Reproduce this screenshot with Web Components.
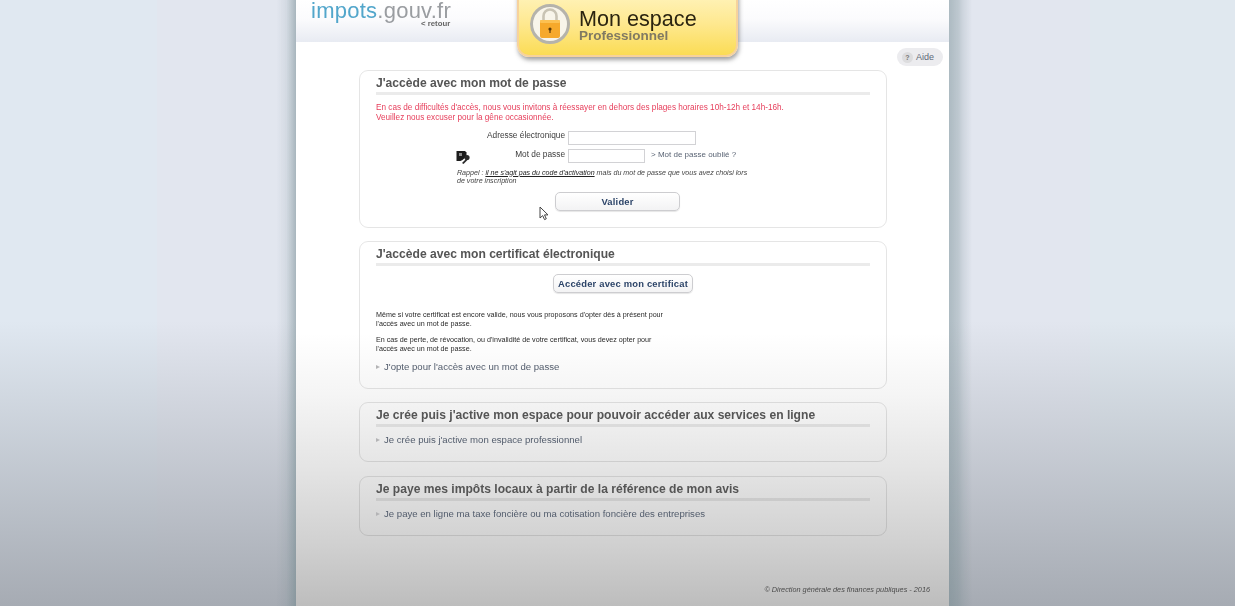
<!DOCTYPE html>
<html lang="fr">
<head>
<meta charset="utf-8">
<title>impots.gouv.fr</title>
<style>
	html, body { margin: 0; height: 100%; overflow: hidden; }
	body {
		font-family: "Liberation Sans", Arial, sans-serif;
		background:
			linear-gradient(to bottom, rgba(166,171,179,0) 53%, rgba(166,171,179,1) 100%),
			linear-gradient(to right, #e0e8f1 0 157px, #e2e6ef 157px 1090px, #e0e8ef 1090px);
	}
	imp-page { filter: blur(0.7px); }
</style>
</head>
<body>

<imp-page>
	<imp-header slot="header"></imp-header>

	<imp-aide></imp-aide>

	<imp-card title="J'accède avec mon mot de passe" height="158">
		<p style="margin:7.5px 0 0;font-size:8.2px;line-height:10px;color:#e63d5a">En cas de difficultés d'accès, nous vous invitons à réessayer en dehors des plages horaires 10h-12h et 14h-16h.<br>Veuillez nous excuser pour la gêne occasionnée.</p>
		<imp-login></imp-login>
	</imp-card>

	<imp-card title="J'accède avec mon certificat électronique" height="148">
		<div style="display:flex;justify-content:center;padding-top:8px">
			<imp-button style="padding:0 4px">Accéder avec mon certificat</imp-button>
		</div>
		<p style="margin:18px 0 0;font-size:7.17px;line-height:9px;color:#2a2a2a">Même si votre certificat est encore valide, nous vous proposons d'opter dès à présent pour<br>l'accès avec un mot de passe.</p>
		<p style="margin:7px 0 0;font-size:7.17px;line-height:9px;color:#2a2a2a">En cas de perte, de révocation, ou d'invalidité de votre certificat, vous devez opter pour<br>l'accès avec un mot de passe.</p>
		<imp-link style="margin-top:7px">J'opte pour l'accès avec un mot de passe</imp-link>
	</imp-card>

	<imp-card title="Je crée puis j'active mon espace pour pouvoir accéder aux services en ligne" height="60">
		<imp-link style="margin-top:7px">Je crée puis j'active mon espace professionnel</imp-link>
	</imp-card>

	<imp-card title="Je paye mes impôts locaux à partir de la référence de mon avis" height="60" style="margin-top:1px">
		<imp-link style="margin-top:7px">Je paye en ligne ma taxe foncière ou ma cotisation foncière des entreprises</imp-link>
	</imp-card>

	<imp-footer>© Direction générale des finances publiques - 2016</imp-footer>
</imp-page>

<script>
class ImpPage extends HTMLElement {
	constructor() {
		super();
		const shadowRoot = this.attachShadow({mode: 'open'});
		shadowRoot.innerHTML = `
			<style>
				:host {
					display: flex;
					flex-direction: column;
					box-sizing: border-box;
					position: relative;
					width: 653px;
					height: 606px;
					margin-left: 296px;
					background: linear-gradient(to bottom, #ffffff 0, #ffffff 55%, #f5f5f5 65%, #e4e4e4 77.5%, #d0d0d0 90%, #bdbdbd 100%);
				}
				:host::before, :host::after {
					content: "";
					position: absolute;
					top: 0;
					bottom: 0;
				}
				:host::before {
					left: -19px;
					width: 19px;
					background: linear-gradient(to right, rgba(105,130,135,0), rgba(105,130,135,.12) 50%, rgba(105,130,135,.48));
				}
				:host::after {
					right: -23px;
					width: 23px;
					background: linear-gradient(to left, rgba(105,130,135,0), rgba(105,130,135,.14) 35%, rgba(105,130,135,.3) 60%, rgba(105,130,135,.44));
				}
				.main {
					display: flex;
					flex-direction: column;
					gap: 13px;
					padding: 28px 62px 0 63px;
					position: relative;
				}
			</style>
			<slot name="header"></slot>
			<div class="main"><slot></slot></div>
		`;
	}
}

class ImpHeader extends HTMLElement {
	constructor() {
		super();
		const shadowRoot = this.attachShadow({mode: 'open'});
		shadowRoot.innerHTML = `
			<style>
				:host {
					display: block;
					position: relative;
					height: 42px;
					background: linear-gradient(to bottom, #ffffff 0, #fbfbfd 45%, #e8ebf2 100%);
				}
				.logo {
					padding: 2px 0 0 15px;
					font-size: 22px;
					line-height: 17px;
					letter-spacing: .25px;
					color: #9a9da1;
					white-space: nowrap;
				}
				.logo b { font-weight: 400; color: #52a6cb; }
				.back {
					position: absolute;
					left: 125px;
					top: 19px;
					font-size: 7.8px;
					line-height: 9px;
					font-weight: 700;
					color: #666;
				}
				.badge {
					position: absolute;
					left: 221px;
					top: -8px;
					box-sizing: border-box;
					width: 221px;
					height: 65px;
					display: flex;
					align-items: flex-start;
					gap: 8px;
					padding: 9px 0 0 10px;
					border: 2px solid #f7d29c;
					border-radius: 0 0 12px 12px;
					background: linear-gradient(to bottom, #fff3bb 0, #fee88e 50%, #fbdc55 100%);
					box-shadow: 1px 3px 4px rgba(70,70,70,.5);
				}
				.lock {
					width: 42px;
					height: 42px;
					flex: none;
				}
				.txt { color: #2b2410; }
				.t1 { font-size: 21.6px; line-height: 22px; padding-top: 5px; }
				.t2 { font-size: 13.5px; line-height: 11px; font-weight: 700; color: #817a62; }
			</style>
			<div class="logo"><b>impots</b>.gouv.fr</div>
			<div class="back">&lt; retour</div>
			<div class="badge">
				<svg class="lock" viewBox="0 0 42 42">
					<circle cx="21" cy="21" r="18.500" fill="#f8f5ea" stroke="#b5b3ab" stroke-width="3"/>
					<path d="M14.500 18v-5a6.500 6.500 0 0 1 13 0v5" fill="none" stroke="#c9c4b4" stroke-width="2.600"/>
					<rect x="11" y="17" width="20" height="18" rx="2" fill="#f6a92b"/>
					<rect x="11" y="17" width="20" height="3" rx="1" fill="#fcc152"/>
					<circle cx="21" cy="26" r="1.600" fill="#5b3a08"/>
					<rect x="20.400" y="26" width="1.200" height="4" fill="#5b3a08"/>
				</svg>
				<div class="txt">
					<div class="t1">Mon espace</div>
					<div class="t2">Professionnel</div>
				</div>
			</div>
		`;
	}
}

class ImpAide extends HTMLElement {
	constructor() {
		super();
		const shadowRoot = this.attachShadow({mode: 'open'});
		shadowRoot.innerHTML = `
			<style>
				:host {
					position: absolute;
					top: 6px;
					left: 601px;
					box-sizing: border-box;
					width: 46px;
					height: 18px;
					display: flex;
					align-items: center;
					gap: 3px;
					padding-left: 5px;
					border-radius: 9px;
					background: #ececef;
					font-size: 9px;
					color: #5e6878;
				}
				.q {
					font-size: 7px;
					font-weight: 700;
					width: 11px;
					height: 11px;
					line-height: 11px;
					text-align: center;
					border-radius: 50%;
					background: #dcdcde;
					color: #777;
				}
			</style>
			<span class="q">?</span><span>Aide</span>
		`;
	}
}

class ImpCard extends HTMLElement {
	constructor() {
		super();
		const shadowRoot = this.attachShadow({mode: 'open'});
		shadowRoot.innerHTML = `
			<style>
				:host {
					display: block;
					box-sizing: border-box;
					border: 1px solid rgba(0,0,0,.1);
					border-radius: 9px;
					padding: 4px 16px 0 16px;
				}
				h2 {
					margin: 0;
					font-size: 12.1px;
					line-height: 16px;
					font-weight: 700;
					color: #555;
					padding-bottom: 1px;
					border-bottom: 3px solid rgba(0,0,0,.08);
					white-space: nowrap;
				}
			</style>
			<h2></h2>
			<slot></slot>
		`;
	}
	connectedCallback() {
		this.shadowRoot.querySelector("h2").textContent = this.getAttribute("title");
		this.removeAttribute("title");
		this.style.height = this.getAttribute("height") + "px";
	}
}

class ImpButton extends HTMLElement {
	constructor() {
		super();
		const shadowRoot = this.attachShadow({mode: 'open'});
		shadowRoot.innerHTML = `
			<style>
				:host {
					display: inline-block;
					box-sizing: border-box;
					height: 19px;
					padding: 0 5px;
					border: 1px solid #cdcdd0;
					border-radius: 5px;
					background: linear-gradient(to bottom, #ffffff, #f3f3f4);
					box-shadow: 0 1px 1px rgba(0,0,0,.1);
					font-size: 9.4px;
					line-height: 17px;
					font-weight: 700;
					letter-spacing: .2px;
					color: #2c4468;
					text-align: center;
					white-space: nowrap;
				}
			</style>
			<slot></slot>
		`;
	}
}

class ImpLink extends HTMLElement {
	constructor() {
		super();
		const shadowRoot = this.attachShadow({mode: 'open'});
		shadowRoot.innerHTML = `
			<style>
				:host {
					display: block;
					font-size: 9.6px;
					line-height: 12px;
					color: #525c6c;
				}
				i {
					display: inline-block;
					width: 0;
					height: 0;
					margin-right: 4px;
					vertical-align: 1px;
					border-left: 4px solid #b4b4b6;
					border-top: 2.5px solid transparent;
					border-bottom: 2.5px solid transparent;
				}
			</style>
			<i></i><slot></slot>
		`;
	}
}

class ImpLogin extends HTMLElement {
	constructor() {
		super();
		const shadowRoot = this.attachShadow({mode: 'open'});
		shadowRoot.innerHTML = `
			<style>
				:host {
					display: block;
					position: relative;
					padding: 8.5px 0 0 0;
					font-size: 8.3px;
					color: #3c3c3c;
				}
				.row {
					display: grid;
					grid-template-columns: 189px max-content 1fr;
					column-gap: 3px;
					align-items: start;
					height: 18px;
				}
				label { text-align: right; line-height: 10px; margin-top: -1px; }
				.row + .row label { margin-top: 0; }
				.field {
					box-sizing: border-box;
					height: 14px;
					border: 1px solid #d2d2d5;
					background: #fff;
				}
				.forgot { padding: 1px 0 0 3px; font-size: 8px; line-height: 10px; color: #5a6474; }
				.key {
					position: absolute;
					left: 80px;
					top: 27px;
					width: 15px;
					height: 15px;
				}
				.note {
					margin: 1.500px 0 0 81px;
					font-size: 7.1px;
					line-height: 8.500px;
					font-style: italic;
					color: #444;
				}
				.note u { color: #222; }
				.submit {
					display: flex;
					padding: 6.500px 0 0 179px;
				}
				imp-button { width: 125px; }
				.cursor { position: absolute; left: 163px; top: 83px; }
			</style>
			<div class="row">
				<label>Adresse électronique</label>
				<div class="field" style="width:128px"></div>
				<span></span>
			</div>
			<div class="row">
				<label>Mot de passe</label>
				<div class="field" style="width:77px"></div>
				<span class="forgot">&gt; Mot de passe oublié ?</span>
			</div>
			<svg class="key" viewBox="0 0 15 15">
				<path d="M0.500 1h8.500l1.500 1.500v4l-4 3.500-2 1h-4z" fill="#1c1c1c"/>
				<path d="M3 3h3v3h-3z" fill="#8d8d8d"/>
				<circle cx="11" cy="7.500" r="2.600" fill="#2a2a2a"/>
				<path d="M10 9l-4 4 1.500 1 4-4z" fill="#2a2a2a"/>
			</svg>
			<div class="note">
				<div>Rappel : <u>il ne s'agit pas du code d'activation</u> mais du mot de passe que vous avez choisi lors</div>
				<div>de votre inscription</div>
			</div>
			<div class="submit"><imp-button>Valider</imp-button></div>
			<svg class="cursor" width="11" height="15" viewBox="0 0 11 15">
				<path d="M1 1v11l2.700-2.400 1.800 4 1.800-.8-1.800-3.900h3.500z" fill="#fff" stroke="#444" stroke-width="1"/>
			</svg>
		`;
	}
}

class ImpFooter extends HTMLElement {
	constructor() {
		super();
		const shadowRoot = this.attachShadow({mode: 'open'});
		shadowRoot.innerHTML = `
			<style>
				:host {
					position: absolute;
					right: 19px;
					top: 543px;
					font-size: 7.3px;
					font-style: italic;
					color: #4b4b4b;
					white-space: nowrap;
				}
			</style>
			<slot></slot>
		`;
	}
}

window.customElements.define('imp-page', ImpPage);
window.customElements.define('imp-header', ImpHeader);
window.customElements.define('imp-aide', ImpAide);
window.customElements.define('imp-card', ImpCard);
window.customElements.define('imp-button', ImpButton);
window.customElements.define('imp-link', ImpLink);
window.customElements.define('imp-login', ImpLogin);
window.customElements.define('imp-footer', ImpFooter);
</script>
</body>
</html>
